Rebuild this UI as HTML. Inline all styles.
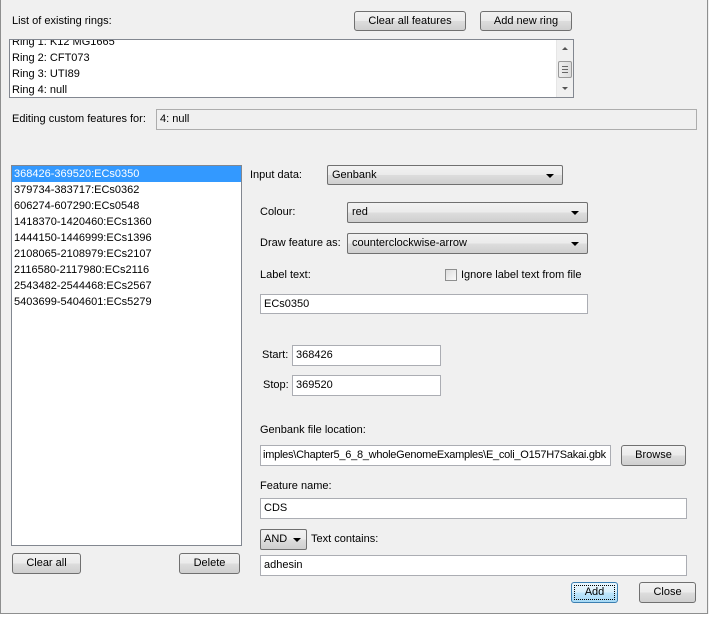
<!DOCTYPE html>
<html><head><meta charset="utf-8"><style>
*{box-sizing:border-box;margin:0;padding:0}
body{width:709px;height:617px;background:#f0f0f0;position:relative;overflow:hidden;font-family:"Liberation Sans",sans-serif;font-size:11px;color:#000}
.a{position:absolute;white-space:nowrap}
.lbl{position:absolute;white-space:nowrap;line-height:14px}
.btn{position:absolute;border:1px solid #707070;border-radius:3px;background:linear-gradient(#f2f2f2 0%,#ebebeb 50%,#dddddd 51%,#cfcfcf 100%);text-align:center;line-height:18px;font-size:11px}
.fld{position:absolute;background:#fff;border:1px solid #abadb3;padding-left:3px;line-height:18px;white-space:nowrap;overflow:hidden}
.cmb{position:absolute;border:1px solid #707070;border-radius:2px;background:linear-gradient(#f2f2f2 0%,#ebebeb 50%,#dddddd 51%,#cfcfcf 100%);padding-left:4px;line-height:18px}
.cmb:after{content:"";position:absolute;right:8px;top:8px;border-left:4px solid transparent;border-right:4px solid transparent;border-top:4px solid #000}
.row{height:16px;line-height:16px;padding-left:2px}
</style></head><body>
<div class="a" style="left:0;top:0;width:1px;height:614px;background:#8e8f8f"></div>
<div class="a" style="left:707px;top:0;width:1px;height:614px;background:#8e8f8f"></div>
<div class="a" style="left:0;top:613px;width:708px;height:1px;background:#8e8f8f"></div>
<div class="a" style="left:0;top:614px;width:709px;height:3px;background:#fff"></div>

<div class="lbl" style="left:12px;top:14px">List of existing rings:</div>
<div class="btn" style="left:354px;top:11px;width:112px;height:20px">Clear all features</div>
<div class="btn" style="left:480px;top:11px;width:92px;height:20px">Add new ring</div>

<div class="a" style="left:9px;top:39px;width:565px;height:59px;background:#fff;border:1px solid #828790;overflow:hidden">
 <div style="position:absolute;left:2px;top:-6px;line-height:16px">Ring 1: K12 MG1665<br>Ring 2: CFT073<br>Ring 3: UTI89<br>Ring 4: null</div>
 <div style="position:absolute;right:0;top:0;width:17px;height:57px;background:#f0f0f0;border-left:1px solid #e6e6e6">
  <div style="position:absolute;left:5px;top:7px;border-left:3px solid transparent;border-right:3px solid transparent;border-bottom:3px solid #555"></div>
  <div style="position:absolute;left:1px;top:21px;width:14px;height:17px;border:1px solid #999;border-radius:2px;background:linear-gradient(90deg,#eee,#ddd)"></div>
  <div style="position:absolute;left:5px;top:26px;width:6px;height:7px;border-top:1px solid #666;border-bottom:1px solid #666"></div>
  <div style="position:absolute;left:5px;top:29px;width:6px;height:1px;background:#666"></div>
  <div style="position:absolute;left:5px;top:47px;border-left:3px solid transparent;border-right:3px solid transparent;border-top:3px solid #555"></div>
 </div>
</div>

<div class="lbl" style="left:12px;top:112px">Editing custom features for:</div>
<div class="fld" style="left:156px;top:109px;width:541px;height:21px;background:#f0f0f0;border-color:#adadad">4: null</div>

<div class="a" style="left:11px;top:165px;width:231px;height:381px;background:#fff;border:1px solid #828790">
 <div class="row" style="background:#3399ff;color:#fff">368426-369520:ECs0350</div>
 <div class="row">379734-383717:ECs0362</div>
 <div class="row">606274-607290:ECs0548</div>
 <div class="row">1418370-1420460:ECs1360</div>
 <div class="row">1444150-1446999:ECs1396</div>
 <div class="row">2108065-2108979:ECs2107</div>
 <div class="row">2116580-2117980:ECs2116</div>
 <div class="row">2543482-2544468:ECs2567</div>
 <div class="row">5403699-5404601:ECs5279</div>
</div>
<div class="btn" style="left:12px;top:553px;width:69px;height:21px;line-height:19px">Clear all</div>
<div class="btn" style="left:179px;top:553px;width:61px;height:21px;line-height:19px">Delete</div>

<div class="lbl" style="left:250px;top:168px">Input data:</div>
<div class="cmb" style="left:327px;top:165px;width:236px;height:20px">Genbank</div>
<div class="lbl" style="left:260px;top:205px">Colour:</div>
<div class="cmb" style="left:347px;top:202px;width:241px;height:21px">red</div>
<div class="lbl" style="left:260px;top:236px">Draw feature as:</div>
<div class="cmb" style="left:347px;top:233px;width:241px;height:21px">counterclockwise-arrow</div>
<div class="lbl" style="left:260px;top:268px">Label text:</div>
<div class="a" style="left:445px;top:269px;width:12px;height:12px;border:1px solid #8e8f8f;background:linear-gradient(135deg,#ddd,#fafafa)"></div>
<div class="lbl" style="left:461px;top:268px">Ignore label text from file</div>
<div class="fld" style="left:260px;top:294px;width:328px;height:20px">ECs0350</div>

<div class="lbl" style="left:262px;top:348px">Start:</div>
<div class="fld" style="left:292px;top:345px;width:149px;height:21px">368426</div>
<div class="lbl" style="left:263px;top:378px">Stop:</div>
<div class="fld" style="left:292px;top:375px;width:149px;height:21px">369520</div>

<div class="lbl" style="left:260px;top:423px">Genbank file location:</div>
<div class="fld" style="left:260px;top:445px;width:351px;height:21px;padding-left:2px;letter-spacing:-0.25px">imples\Chapter5_6_8_wholeGenomeExamples\E_coli_O157H7Sakai.gbk</div>
<div class="btn" style="left:621px;top:445px;width:65px;height:21px;line-height:19px">Browse</div>
<div class="lbl" style="left:260px;top:479px">Feature name:</div>
<div class="fld" style="left:260px;top:498px;width:427px;height:21px">CDS</div>
<div class="cmb" style="left:260px;top:529px;width:47px;height:21px;padding-left:3px">AND</div>
<div class="lbl" style="left:311px;top:532px">Text contains:</div>
<div class="fld" style="left:260px;top:555px;width:427px;height:21px">adhesin</div>

<div class="btn" style="left:571px;top:582px;width:47px;height:21px;line-height:19px;border-color:#3c7fb1;background:linear-gradient(#eaf6fd,#d9f0fc 50%,#bee6fd 51%,#a7d9f5)"><div style="position:absolute;left:2px;top:2px;right:2px;bottom:2px;border:1px dotted #000"></div>Add</div>
<div class="btn" style="left:639px;top:582px;width:57px;height:21px;line-height:19px">Close</div>
<style>.cmb[style*="width:47px"]:after{right:5px}</style>
</body></html>
